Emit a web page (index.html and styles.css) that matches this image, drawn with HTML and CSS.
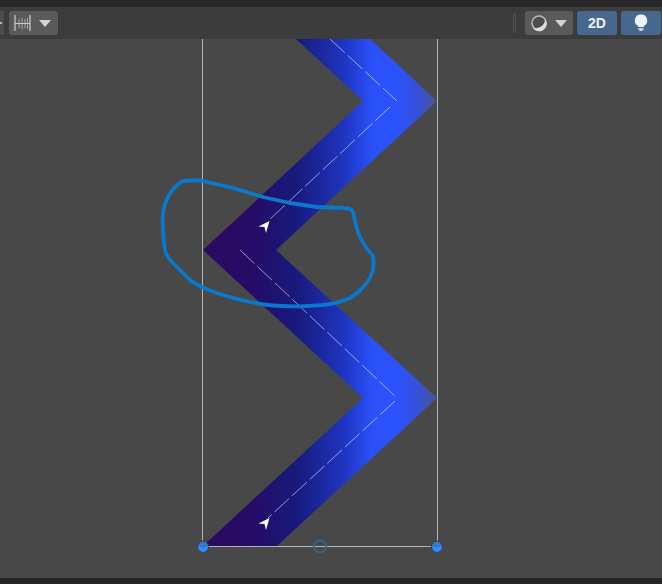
FILE: index.html
```html
<!DOCTYPE html>
<html lang="en">
  <head>
    <meta charset="UTF-8" />
    <title>Scene view</title>
    <link rel="stylesheet" href="styles.css">
  </head>
  <body>
    <div class="top-strip"></div>
    <div class="toolbar">
      <div class="tool-stub"><span class="stub-dot"></span></div>
      <div class="tool-btn snap-btn">
        <svg class="snap-icon" width="18" height="18" viewBox="0 0 18 18">
          <path d="M1 1V17M16 1V17" stroke="#b8b8b8" stroke-width="1.500" fill="none" />
          <path d="M5 5V14M8 4V15M11 5V14M13.500 4V15" stroke="#a8a8a8" stroke-width="1" fill="none" />
          <path d="M1 9.500H16" stroke="#c8c8c8" stroke-width="1" fill="none" />
        </svg>
        <span class="caret"></span>
      </div>
      <div class="spacer"></div>
      <div class="grip"></div>
      <div class="tool-btn shade-btn">
        <svg width="18" height="18" viewBox="0 0 18 18">
          <circle cx="9" cy="9" r="7" stroke="#bcbcbc" stroke-width="1.500" fill="#4c4c4c" />
          <path d="M3 14A7.500 7.500 0 0 0 16.500 8L15 5C15.500 10 10 15 3 14Z" fill="#dcdcdc" />
        </svg>
        <span class="caret"></span>
      </div>
      <div class="toggle-btn">2D</div>
      <div class="toggle-btn">
        <svg width="14" height="18" viewBox="0 0 14 18">
          <path d="M7 0.500A6 6 0 0 1 10 11.800V13H4V11.800A6 6 0 0 1 7 0.500Z" fill="#f0f2f4" />
          <path d="M4.500 14H9.500V15.500L8 17H6L4.500 15.500Z" fill="#c8d0d8" />
        </svg>
      </div>
    </div>
    <div class="viewport">
      <svg class="scene" width="662" height="539" viewBox="0 39 662 539">
        <defs>
          <linearGradient id="ribbon" gradientUnits="userSpaceOnUse" x1="203" y1="0" x2="437" y2="0">
            <stop offset="0" stop-color="#2c0a60" />
            <stop offset="0.2" stop-color="#260b66" />
            <stop offset="0.4" stop-color="#181a7c" />
            <stop offset="0.6" stop-color="#1f34c0" />
            <stop offset="0.72" stop-color="#2a50f8" />
            <stop offset="0.82" stop-color="#2a52ff" />
            <stop offset="0.92" stop-color="#3650d8" />
            <stop offset="1" stop-color="#4a5590" />
          </linearGradient>
        </defs>
        <path d="M296 39L363 101L203 250L363 398L203 546H277L437 398L276 250L437 101L370 39Z" fill="url(#ribbon)" />
        <g class="centre-line">
          <path d="M330 39L397 101" />
          <path d="M390 107L268 221" />
          <path d="M240 250L396 397" />
          <path d="M395 401L268 518" />
        </g>
        <path d="M258.500 226.500L269.500 221L266 233L264.500 227Z" fill="#fff" />
        <path d="M258.500 523.500L269.500 518L266 530L264.500 524Z" fill="#fff" />
        <path class="bounds" d="M202.500 39V546.500H437.500V39" />
        <circle class="pivot" cx="320" cy="546.500" r="6" />
        <g class="handle">
          <circle cx="203" cy="546.500" r="5.500" />
          <path d="M198 547A5 5 0 0 0 208 547Z" />
        </g>
        <g class="handle">
          <circle cx="437" cy="546.500" r="5.500" />
          <path d="M432 547A5 5 0 0 0 442 547Z" />
        </g>
        <path class="scribble" d="M183 181C190 180 197 180 203 181L233 188L263 197L290 203L317 207L343 208C348 208 352 209 353 212C355 220 356 227 358 232C361 241 366 248 373 256C374 263 374 268 372 273C370 279 367 283 363 287C359 292 355 295 350 298C342 302 333 304 323 305C309 306 296 307 283 306C271 306 261 304 250 302C238 299 228 297 217 293C208 290 198 286 190 280L173 263C169 259 166 255 165 250C163 238 162 225 163 213C164 207 165 202 168 197C172 190 177 184 183 181Z" />
      </svg>
    </div>
    <div class="bottom-strip"></div>
  </body>
</html>
```

FILE: styles.css
```css
* {
  margin: 0;
  padding: 0;
  box-sizing: border-box;
}

body {
  width: 662px;
  height: 584px;
  overflow: hidden;
  background: #484848;
  font-family: "Liberation Sans", Arial, sans-serif;
  display: flex;
  flex-direction: column;
}

.top-strip {
  height: 7px;
  background: #282828;
}

.toolbar {
  height: 32px;
  background: #3c3c3c;
  display: flex;
  align-items: flex-start;
  padding-top: 4px;
}

.tool-stub {
  width: 4px;
  height: 24px;
  background: #4c4c4c;
  margin-right: 5px;
  display: flex;
  align-items: center;
}

.stub-dot {
  width: 2px;
  height: 2px;
  background: #b8b8b8;
}

.tool-btn {
  height: 24px;
  background: #5a5a5a;
  border-radius: 3px;
  display: flex;
  align-items: center;
}

.snap-btn {
  width: 49px;
  padding-left: 5px;
}

.shade-btn {
  width: 48px;
  padding-left: 5px;
  margin-right: 4px;
}

.caret {
  width: 0;
  height: 0;
  border-left: 6px solid transparent;
  border-right: 6px solid transparent;
  border-top: 7px solid #d4d4d4;
  margin-left: 7px;
}

.spacer {
  flex: 1;
}

.grip {
  width: 3px;
  height: 20px;
  margin: 2px 9px 0 0;
  border-left: 1px solid #505050;
  border-right: 1px solid #505050;
}

.toggle-btn {
  width: 40px;
  height: 24px;
  background: #46688e;
  border-radius: 3px;
  margin-right: 4px;
  color: #f0f2f4;
  font-weight: bold;
  font-size: 14px;
  display: flex;
  align-items: center;
  justify-content: center;
}

.toggle-btn:last-child {
  margin-right: 1px;
}

.viewport {
  flex: 1;
  background: #484848;
  overflow: hidden;
}

.scene {
  display: block;
}

.centre-line path {
  fill: none;
  stroke: #fff;
  stroke-width: 0.7;
  stroke-opacity: 0.8;
  stroke-dasharray: 20 4;
}

.bounds {
  fill: none;
  stroke: #b4b4b4;
  stroke-width: 1;
}

.pivot {
  fill: none;
  stroke: #3d6488;
  stroke-width: 2;
}

.handle circle {
  fill: #3478c8;
  stroke: #2c3a48;
  stroke-width: 1;
}

.handle path {
  fill: #2f8cff;
}

.scribble {
  fill: none;
  stroke: #0a78cc;
  stroke-width: 3.800;
  stroke-linejoin: round;
}

.bottom-strip {
  height: 6px;
  background: #262626;
}
```
